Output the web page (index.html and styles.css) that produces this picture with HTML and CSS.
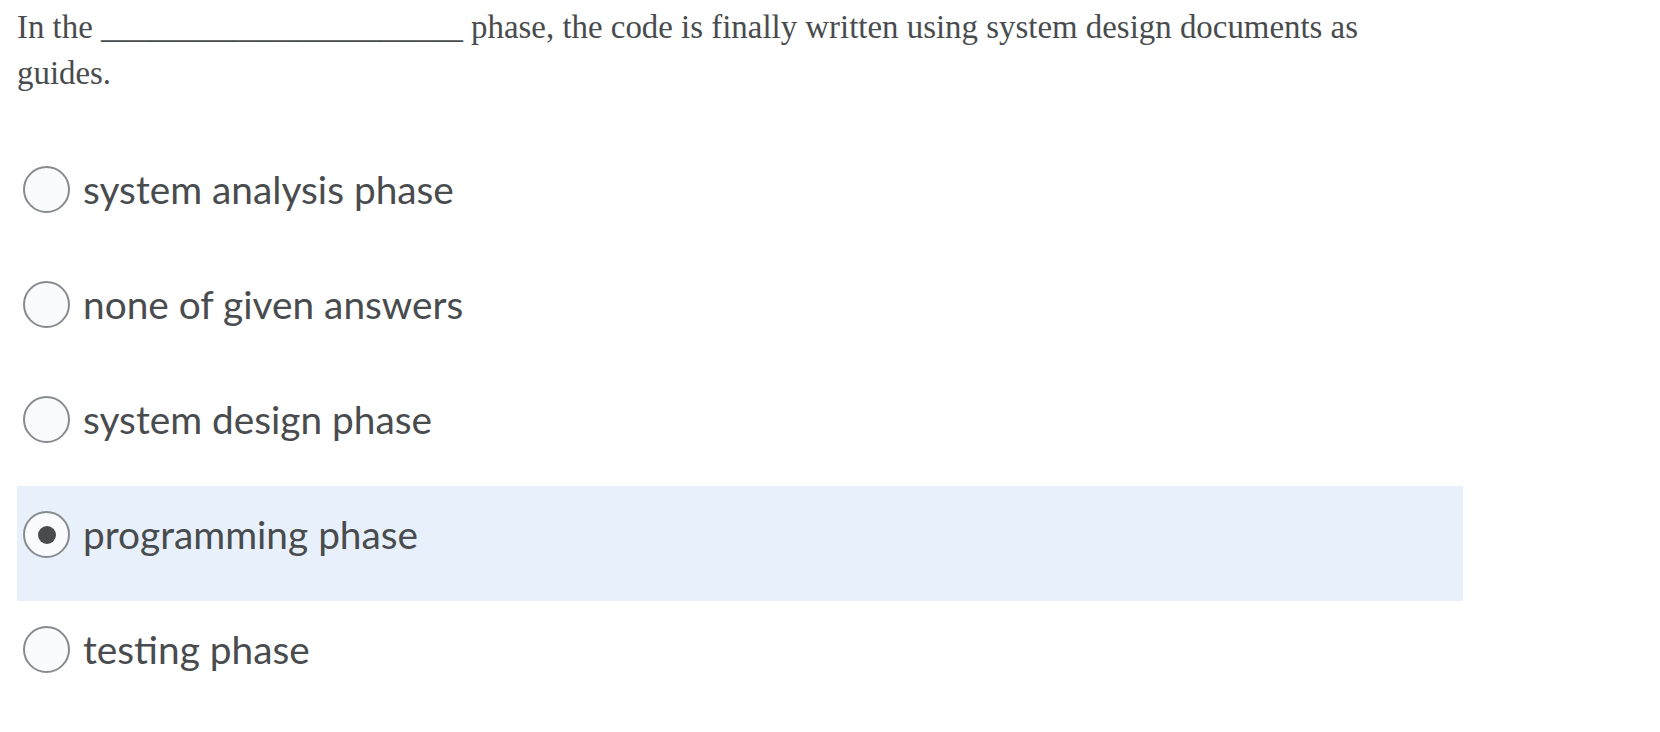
FILE: index.html
```html
<!DOCTYPE html>
<html lang="en">
<head>
<meta charset="utf-8">
<title>Question</title>
<link rel="stylesheet" href="styles.css">
</head>
<body>
<div class="page">
  <p class="question">In the ______________________ phase, the code is finally written using system design documents as guides.</p>
  <div class="options">
    <label class="option"><span class="radio"></span><span class="label-text">system analysis phase</span></label>
    <label class="option"><span class="radio"></span><span class="label-text">none of given answers</span></label>
    <label class="option"><span class="radio"></span><span class="label-text">system design phase</span></label>
    <label class="option selected"><span class="radio checked"></span><span class="label-text">programming phase</span></label>
    <label class="option"><span class="radio"></span><span class="label-text">testing phase</span></label>
  </div>
</div>
</body>
</html>
```

FILE: styles.css
```css
html, body {
  margin: 0;
  padding: 0;
  background: #ffffff;
}
.page {
  padding: 0 17px;
  width: 1446px;
}
.question {
  margin: 0;
  padding-top: 4px;
  width: 1400px;
  font-family: "Liberation Serif", "Times New Roman", serif;
  font-size: 32.9px;
  line-height: 46px;
  color: #494c4e;
}
.options {
  margin-top: 45px;
  display: flex;
  flex-direction: column;
}
.option {
  display: flex;
  align-items: center;
  gap: 13px;
  height: 115px;
  box-sizing: border-box;
  padding: 25px 6px 43px;
  font-family: Lato, "Open Sans", sans-serif;
  font-size: 38.8px;
  line-height: 47px;
  color: #494c4e;
}
.option.selected {
  background: #e8f1fb;
}
.radio {
  flex: none;
  width: 47px;
  height: 47px;
  box-sizing: border-box;
  border: 2px solid #888b8e;
  border-radius: 50%;
  background: #f9fbfe;
  display: flex;
  align-items: center;
  justify-content: center;
}
.radio.checked::after {
  content: "";
  width: 18px;
  height: 18px;
  border-radius: 50%;
  background: #494c4e;
}
```
